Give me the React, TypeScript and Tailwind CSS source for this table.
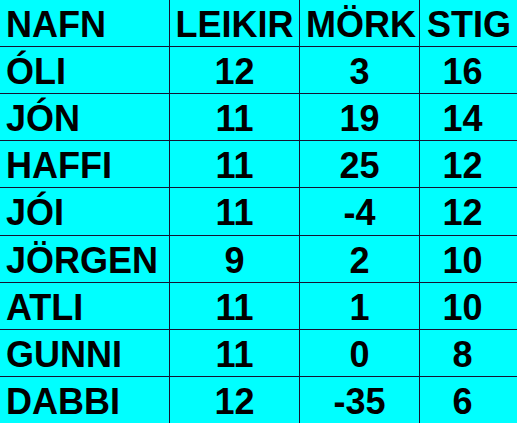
const rows: [string, string, string, string][] = [
  ["ÓLI", "12", "3", "16"],
  ["JÓN", "11", "19", "14"],
  ["HAFFI", "11", "25", "12"],
  ["JÓI", "11", "-4", "12"],
  ["JÖRGEN", "9", "2", "10"],
  ["ATLI", "11", "1", "10"],
  ["GUNNI", "11", "0", "8"],
  ["DABBI", "12", "-35", "6"],
];

const cell = "bg-[#00ffff] flex items-center whitespace-nowrap pt-[3px]";

export default function App() {
  return (
    <div
      className="w-[517px] h-[423px] overflow-hidden bg-[#00ffff] text-black font-bold text-[36px] leading-none"
      style={{ fontFamily: '"Liberation Sans", Arial, sans-serif' }}
    >
      <div className="grid grid-cols-[169px_129px_119px_97px] grid-rows-[46px_46px_46px_46px_47px_46px_46px_46px_46px] gap-px bg-[#141432] w-[517px] h-[423px]">
        <div className={`${cell} pl-[6px]`}>NAFN</div>
        <div className={`${cell} justify-center`}>LEIKIR</div>
        <div className={`${cell} justify-center pl-[3px]`}>MÖRK</div>
        <div className={`${cell} pl-[7px]`}>STIG</div>
        {rows.map((r) => (
          <>
            <div key={r[0] + "a"} className={`${cell} pl-[6px]`}>{r[0]}</div>
            <div key={r[0] + "b"} className={`${cell} justify-center`}>{r[1]}</div>
            <div key={r[0] + "c"} className={`${cell} justify-center`}>{r[2]}</div>
            <div key={r[0] + "d"} className={`${cell} justify-center pr-[12px]`}>{r[3]}</div>
          </>
        ))}
      </div>
    </div>
  );
}
